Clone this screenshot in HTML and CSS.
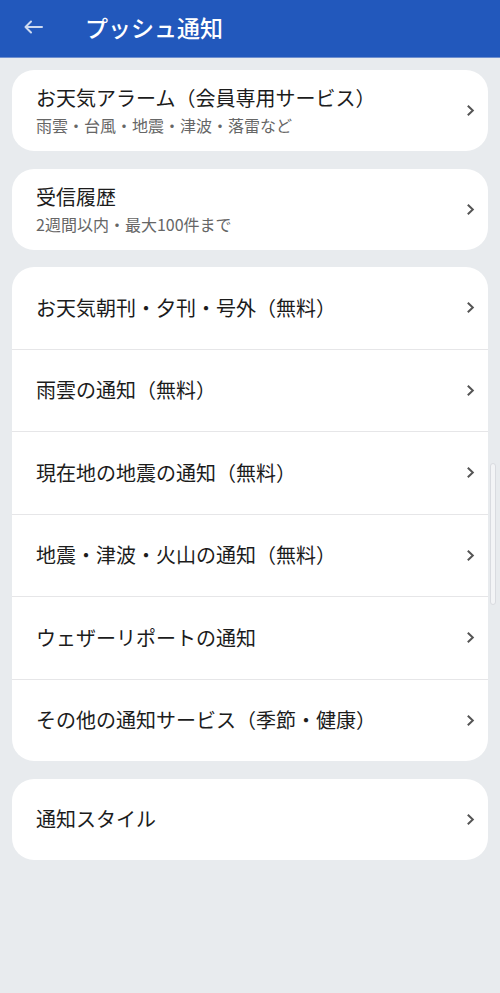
FILE: index.html
```html
<!DOCTYPE html>
<html lang="ja">
<head>
<meta charset="utf-8">
<title>プッシュ通知</title>
<link rel="stylesheet" href="styles.css">
</head>
<body>
<header class="appbar">
  <svg class="back" width="20" height="14" viewBox="0 0 20 14"><path d="M19 7H2.5M8 1.5L2.5 7L8 12.5" fill="none" stroke="currentColor" stroke-width="2" stroke-linecap="round" stroke-linejoin="round"/></svg>
  <h1 class="title">プッシュ通知</h1>
</header>
<main class="content">
  <section class="card">
    <div class="row">
      <div class="text">
        <div class="label">お天気アラーム（会員専用サービス）</div>
        <div class="sub">雨雲・台風・地震・津波・落雷など</div>
      </div>
      <svg class="chev" width="9" height="13" viewBox="0 0 9 13"><path d="M1.8 1.8L6.8 6.5L1.8 11.2" fill="none" stroke="currentColor" stroke-width="2"/></svg>
    </div>
  </section>
  <section class="card">
    <div class="row">
      <div class="text">
        <div class="label">受信履歴</div>
        <div class="sub">2週間以内・最大100件まで</div>
      </div>
      <svg class="chev" width="9" height="13" viewBox="0 0 9 13"><path d="M1.8 1.8L6.8 6.5L1.8 11.2" fill="none" stroke="currentColor" stroke-width="2"/></svg>
    </div>
  </section>
  <section class="card">
    <div class="row list">
      <div class="label">お天気朝刊・夕刊・号外（無料）</div>
      <svg class="chev" width="9" height="13" viewBox="0 0 9 13"><path d="M1.8 1.8L6.8 6.5L1.8 11.2" fill="none" stroke="currentColor" stroke-width="2"/></svg>
    </div>
    <div class="row list">
      <div class="label">雨雲の通知（無料）</div>
      <svg class="chev" width="9" height="13" viewBox="0 0 9 13"><path d="M1.8 1.8L6.8 6.5L1.8 11.2" fill="none" stroke="currentColor" stroke-width="2"/></svg>
    </div>
    <div class="row list">
      <div class="label">現在地の地震の通知（無料）</div>
      <svg class="chev" width="9" height="13" viewBox="0 0 9 13"><path d="M1.8 1.8L6.8 6.5L1.8 11.2" fill="none" stroke="currentColor" stroke-width="2"/></svg>
    </div>
    <div class="row list">
      <div class="label">地震・津波・火山の通知（無料）</div>
      <svg class="chev" width="9" height="13" viewBox="0 0 9 13"><path d="M1.8 1.8L6.8 6.5L1.8 11.2" fill="none" stroke="currentColor" stroke-width="2"/></svg>
    </div>
    <div class="row list">
      <div class="label">ウェザーリポートの通知</div>
      <svg class="chev" width="9" height="13" viewBox="0 0 9 13"><path d="M1.8 1.8L6.8 6.5L1.8 11.2" fill="none" stroke="currentColor" stroke-width="2"/></svg>
    </div>
    <div class="row list">
      <div class="label">その他の通知サービス（季節・健康）</div>
      <svg class="chev" width="9" height="13" viewBox="0 0 9 13"><path d="M1.8 1.8L6.8 6.5L1.8 11.2" fill="none" stroke="currentColor" stroke-width="2"/></svg>
    </div>
  </section>
  <section class="card">
    <div class="row">
      <div class="label">通知スタイル</div>
      <svg class="chev" width="9" height="13" viewBox="0 0 9 13"><path d="M1.8 1.8L6.8 6.5L1.8 11.2" fill="none" stroke="currentColor" stroke-width="2"/></svg>
    </div>
  </section>
</main>
<div class="scrollthumb"></div>
</body>
</html>
```

FILE: styles.css
```css
html, body {
  margin: 0;
  padding: 0;
}
body {
  background: #e8ebee;
  font-family: "Noto Sans CJK JP", "Noto Sans", Roboto, sans-serif;
  color: #1c1c1c;
  min-height: 993px;
}
.appbar {
  height: 58px;
  background: #2258bc;
  display: flex;
  align-items: center;
  padding: 0 0 4px 23px;
  box-sizing: border-box;
  border-bottom: 1px solid #6f8fcf;
}
.back {
  color: rgba(255, 255, 255, 0.78);
  flex: none;
}
.title {
  margin: 0 0 0 42px;
  font-size: 23px;
  font-weight: 500;
  color: #ffffff;
  line-height: 30px;
}
.content {
  display: flex;
  flex-direction: column;
  gap: 17.5px;
  padding: 12px 12px 0 12px;
}
.card {
  background: #ffffff;
  border-radius: 22px;
  overflow: hidden;
}
.row {
  display: flex;
  align-items: center;
  justify-content: space-between;
  height: 81px;
  padding: 0 13px 0 24px;
  box-sizing: border-box;
}
.row.list {
  height: 81.5px;
  box-sizing: content-box;
  border-bottom: 1px solid #e6e6e8;
}
.row.list:last-child {
  border-bottom: none;
}
.text {
  display: flex;
  flex-direction: column;
}
.label {
  font-size: 20px;
  line-height: 28px;
}
.sub {
  font-size: 16px;
  line-height: 24px;
  color: #666666;
  margin-top: 1px;
}
.chev {
  color: #555555;
  flex: none;
}
.scrollthumb {
  position: absolute;
  left: 490px;
  top: 463px;
  width: 4px;
  height: 140px;
  border-radius: 3px;
  background: #f3f4f6;
  border: 1px solid #d9dbe0;
}
```
